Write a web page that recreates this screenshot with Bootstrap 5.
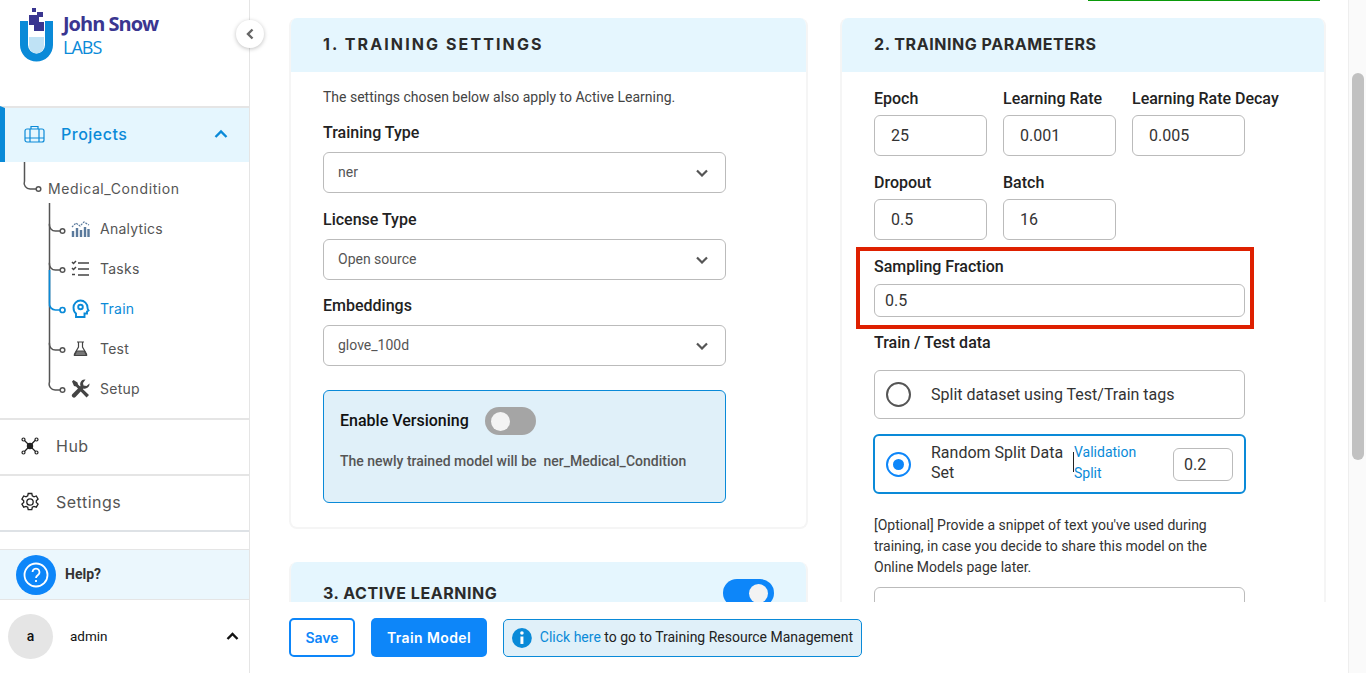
<!DOCTYPE html>
<html lang="en">
<head>
    <meta charset="UTF-8">
    <meta name="viewport" content="width=device-width, initial-scale=1.0">
    <title>Train - Medical_Condition</title>
    <link href="https://cdn.jsdelivr.net/npm/bootstrap@5.3.0/dist/css/bootstrap.min.css" rel="stylesheet">
    <style>
        body { font-family: Roboto, "Liberation Sans", sans-serif; color: #212529; background: #fff; font-size: 14px; }
        .side-bar { width: 250px; border-right: 1px solid #e5e5e5; }
        .logo-area { height: 106px; padding: 8px 0 0 20px; gap: 10px; }
        .logo-name { font-family: "Open Sans", sans-serif; font-weight: 700; font-size: 20px; letter-spacing: -1px; color: #3a3690; line-height: 22px; margin-top: 5px; }
        .logo-labs { font-family: "Open Sans", sans-serif; font-size: 18px; letter-spacing: -1px; color: #0a8ad8; line-height: 25px; }
        .collapse-btn { top: 20px; right: -15px; width: 28px; height: 28px; background: #fff; border-radius: 50%; box-shadow: 0 1px 4px rgba(0,0,0,.25); z-index: 5; }
        .menu-row { height: 56px; border-top: 2px solid #e5e5e5; padding: 0 0 2px 20px; font-family: Inter, sans-serif; font-size: 16px; letter-spacing: .5px; color: #555; }
        .menu-row svg { margin-right: 16px; }
        .menu-active { background: #e5f6fe; color: #0a8ad8; border-left: 5px solid #0a8ad8; padding: 0 21px 2px 19px; gap: 16px; font-weight: 500; height: 56px; border-top: 2px solid #e5e5e5; font-family: Inter, sans-serif; font-size: 16px; letter-spacing: .5px; }
        .menu-tree { height: 256px; font-family: Inter, sans-serif; font-size: 14px; letter-spacing: .25px; color: #555; }
        .tree-lines { left: 0; top: 0; }
        .tree-project { height: 46px; padding: 16px 0 0 48px; letter-spacing: .6px; }
        .tree-item { height: 40px; padding-left: 71px; gap: 10px; }
        .tree-on { color: #0a8ad8; }
        .tree-icon { width: 19px; height: 19px; }
        .help-row { height: 51px; margin-top: 17px; background: #ebf7fd; border-top: 1px solid #e5e5e5; border-bottom: 1px solid #e5e5e5; padding-left: 16px; gap: 9px; font-size: 14px; font-weight: 700; color: #333; }
        .help-circle { width: 40px; height: 40px; background: #0d86f9; border-radius: 50%; }
        .user-row { height: 72px; padding: 0 10px 0 8px; font-size: 13.5px; color: #111; }
        .user-avatar { width: 45px; height: 45px; background: #e5e5e5; margin-right: 17px; font-size: 14px; font-weight: 500; }
        .scroll-area { padding: 18px 0 0 39px; gap: 32px; }
        .top-toast { top: 0; left: 838px; width: 232px; height: 1px; background: #0a9a0a; }
        .col-one { width: 519px; }
        .col-two { width: 486px; }
        .panel-box { border: 2px solid #f5f5f5; border-top: 0; border-radius: 8px; overflow: hidden; flex-shrink: 0; }
        .panel-head { height: 54px; background: #e5f6fe; padding: 0 32px 2px; font-family: Inter, sans-serif; font-weight: 700; font-size: 16px; color: #2b2b2b; letter-spacing: .55px; }
        .head-wide { letter-spacing: 2.1px; }
        .head-tall { height: 62px; padding-bottom: 0; }
        .panel-gap { margin-top: 33px; }
        .panel-text { padding: 15px 32px 24px; }
        .panel-note { font-size: 14px; color: #444; margin-bottom: 14px; line-height: 20px; }
        .field-label { font-size: 16px; font-weight: 500; line-height: 24px; margin-bottom: 7px; color: #222; }
        .pick-box { width: 403px; height: 41px; font-size: 14px; color: #555; padding: 0 14px; border-color: #bbb; margin-bottom: 14px; background-image: url("data:image/svg+xml,%3csvg xmlns='http://www.w3.org/2000/svg' viewBox='0 0 12 8'%3e%3cpath fill='none' stroke='%23555' stroke-width='2.200' d='M1 1.500l5 5 5-5'/%3e%3c/svg%3e"); background-size: 12px 8px; background-position: right 17px center; }
        .pick-first { margin-bottom: 15px; }
        .version-box { width: 403px; height: 113px; margin-top: 24px; background: #e0f0f9; border: 1px solid #0a8ad8; border-radius: 6px; padding: 14px 16px; }
        .version-title { font-size: 16px; font-weight: 500; color: #111; gap: 16px; height: 32px; }
        .switch-off { width: 51px; height: 28px; border-radius: 14px; background: #a5a5a5; padding: 0 6px; }
        .switch-on { width: 51px; height: 28px; border-radius: 14px; background: #0d86f9; padding: 0 6px; }
        .switch-dot { width: 19px; height: 19px; border-radius: 50%; background: #f3f3f3; }
        .version-note { font-size: 14px; font-weight: 500; color: #555; margin-top: 14px; }
        .num-grid { display: grid; grid-template-columns: repeat(3, 113px); column-gap: 16px; row-gap: 0; }
        .num-field { height: 84px; }
        .num-label { font-size: 16px; font-weight: 500; line-height: 24px; color: #222; white-space: nowrap; margin-bottom: 4px; }
        .num-input { height: 41px; width: 113px; font-size: 16px; padding: 0 16px; border-color: #bbb; color: #333; }
        .sample-box { width: 398px; height: 82px; margin: -8px 0 0 -18px; border: 4px solid #de2000; padding: 4px 0 0 14px; }
        .sample-gap { margin-bottom: 5px; }
        .sample-input { height: 33px; width: 371px; font-size: 16px; padding: 0 10px; border-color: #bbb; color: #333; }
        .split-title { font-size: 16px; font-weight: 500; line-height: 24px; color: #222; margin-top: 2px; }
        .split-one { width: 371px; height: 49px; margin-top: 15px; border: 1px solid #bbb; border-radius: 6px; padding-left: 12px; gap: 19px; font-size: 16px; color: #333; }
        .split-two { width: 373px; height: 60px; margin: 15px 0 0 -1px; border: 2px solid #0a8ad8; border-radius: 6px; padding: 0 12px 2px 11px; gap: 20px; font-size: 16px; line-height: 20px; color: #333; }
        .radio-off { width: 25px; height: 25px; border: 2px solid #555; border-radius: 50%; flex-shrink: 0; margin-left: -1px; margin-right: 1px; }
        .radio-on { width: 25px; height: 25px; border: 2px solid #0d86f9; border-radius: 50%; flex-shrink: 0; margin-top: 2px; }
        .radio-on span { width: 11px; height: 11px; background: #0d86f9; border-radius: 50%; }
        .split-name { width: 143px; flex-shrink: 0; }
        .split-link { color: #0a8ad8; font-size: 14px; line-height: 21px; width: 88px; flex-shrink: 0; margin-left: -20px; }
        .split-caret { left: -1px; top: 10px; width: 1px; height: 20px; background: #222; }
        .split-input { width: 60px; height: 33px; font-size: 16px; padding: 0 10px; border-color: #bbb; color: #333; margin: 2px 0 0 -9px; }
        .split-hint { font-size: 14px; line-height: 21px; color: #333; margin-top: 21px; width: 371px; }
        .snippet-box { width: 371px; height: 80px; margin-top: 9px; border-color: #bbb; }
        .foot-bar { height: 71px; padding: 0 0 0 39px; gap: 16px; background: #fff; }
        .btn-save { width: 66px; height: 39px; border: 2px solid #0d86f9; color: #0d86f9; background: #fff; font-family: Inter, sans-serif; font-weight: 600; font-size: 14px; padding: 0; border-radius: 5px; }
        .btn-train { width: 116px; height: 39px; background: #0d86f9; color: #fff; border: 0; font-family: Inter, sans-serif; font-weight: 600; font-size: 14px; letter-spacing: .4px; padding: 0; border-radius: 5px; }
        .info-box { width: 359px; height: 38px; background: #e0f0f9; border: 1px solid #0a8ad8; border-radius: 5px; padding: 0 8px; gap: 8px; font-size: 14px; color: #222; white-space: nowrap; }
        .info-link { color: #0a8ad8; }
        .scroll-track { width: 18px; background: #fafafa; border-left: 1px solid #eee; padding: 73px 0 0 3px; flex-shrink: 0; }
        .scroll-thumb { width: 12px; height: 387px; background: #c1c1c1; border-radius: 6px; }
    </style>
</head>
<body class="overflow-hidden">
<div class="d-flex vh-100">
    <!-- sidebar -->
    <aside class="side-bar d-flex flex-column flex-shrink-0 position-relative">
        <div class="logo-area d-flex">
            <svg width="33" height="54" viewBox="0 0 33 54">
                <path d="M0 13h8v24a8 8 0 0 0 17 0V13h8v24a16 16 0 0 1-33 0z" fill="#0a8ad8"/>
                <path d="M9 29h15v9a7.500 7.500 0 0 1-15 0z" fill="#bfe2f5"/>
                <path d="M12 0h4v4h-4zM9 7h8V4h6v5h-4v5h5v9H14v-6H9z" fill="#3a3690"/>
            </svg>
            <div>
                <div class="logo-name">John Snow</div>
                <div class="logo-labs">LABS</div>
            </div>
        </div>
        <div class="collapse-btn position-absolute d-flex align-items-center justify-content-center">
            <svg width="10" height="12" viewBox="0 0 10 12"><path d="M7.500 1.500 3 6l4.500 4.500" fill="none" stroke="#666" stroke-width="2.400"/></svg>
        </div>
        <div class="menu-active d-flex align-items-center">
            <svg width="21" height="18" viewBox="0 0 21 18" fill="none" stroke="#0a8ad8" stroke-width="1.200"><rect x="1" y="4" width="19" height="13" rx="2"/><path d="M7 4V1.500h7V4M6 4v13M15 4v13M1 13h19"/></svg>
            <span class="flex-grow-1">Projects</span>
            <svg width="14" height="10" viewBox="0 0 14 10"><path d="M1.500 8 7 2.500 12.500 8" fill="none" stroke="#0a8ad8" stroke-width="2.400"/></svg>
        </div>
        <div class="menu-tree position-relative">
            <svg class="tree-lines position-absolute" width="80" height="256" viewBox="0 0 80 256" fill="none" stroke="#555" stroke-width="1.500">
                <path d="M24.500 0v19a6 6 0 0 0 6 8h6"/><circle cx="38.500" cy="27" r="2.300" fill="#fff"/>
                <path d="M49.500 41v179a6 6 0 0 0 6 8h5"/>
                <path d="M49.500 62a6 6 0 0 0 6 7h5M49.500 101a6 6 0 0 0 6 7h5M49.500 181a6 6 0 0 0 6 7h5"/>
                <path d="M49.500 108v33a6 6 0 0 0 6 7h5" stroke="#0a8ad8" stroke-width="1.700"/>
                <circle cx="62.500" cy="69" r="2.300" fill="#fff"/><circle cx="62.500" cy="108" r="2.300" fill="#fff"/>
                <circle cx="62.500" cy="148" r="2.500" fill="#fff" stroke="#0a8ad8" stroke-width="1.700"/>
                <circle cx="62.500" cy="188" r="2.300" fill="#fff"/><circle cx="62.500" cy="228" r="2.300" fill="#fff"/>
            </svg>
            <div class="tree-project">Medical_Condition</div>
            <div class="tree-item d-flex align-items-center">
                <svg class="tree-icon" viewBox="0 0 19 19" fill="none" stroke="#5b7a9c" stroke-width="1.200"><path d="M1 8 5 4l4 3 4-4 5 3" stroke-dasharray="2 1"/><path d="M2 18v-6M6 18V9M10 18v-7M14 18V8M17.500 18v-8" stroke-width="2.400"/></svg>
                <span>Analytics</span>
            </div>
            <div class="tree-item d-flex align-items-center">
                <svg class="tree-icon" viewBox="0 0 19 19" fill="none" stroke="#444" stroke-width="1.500"><path d="M7 4h11M7 10h11M7 16h11"/><path d="m1 3 1.500 1.500L5 2M1 9l1.500 1.500L5 8M1 15.500h3"/></svg>
                <span>Tasks</span>
            </div>
            <div class="tree-item tree-on d-flex align-items-center">
                <svg class="tree-icon" viewBox="0 0 19 19" fill="none" stroke="#0a8ad8" stroke-width="1.900"><path d="M5 18v-3.500C3 13 2.500 11 2.500 8.500a7 7 0 0 1 14 0c0 1 0 1.500 1 3l-1.500 1v2h-2.500V18z"/><circle cx="9.500" cy="8" r="2.300"/></svg>
                <span>Train</span>
            </div>
            <div class="tree-item d-flex align-items-center">
                <svg class="tree-icon" viewBox="0 0 19 19" fill="none" stroke="#444" stroke-width="1.200"><path d="M6 3h7M7.500 3v5L3.500 15a1 1 0 0 0 1 1.500h10a1 1 0 0 0 1-1.500l-4-7V3"/><path d="M5.500 12h8l2 4.500h-12z" fill="#777"/></svg>
                <span>Test</span>
            </div>
            <div class="tree-item d-flex align-items-center">
                <svg class="tree-icon" viewBox="0 0 19 19" fill="#444"><path d="M1 2.500 2.500 1l4 2.500.5 2 11 10.500-2.500 2.500L5 7.500l-2-.5z"/><path d="M18.500 4.500 15.500 7l-3-.5L12 4l2.500-3.500A4.800 4.800 0 0 0 9.500 7L1.500 15a2 2 0 0 0 3 3L12.500 9.500a4.800 4.800 0 0 0 6-5z"/></svg>
                <span>Setup</span>
            </div>
        </div>
        <div class="menu-row d-flex align-items-center">
            <svg width="20" height="18" viewBox="0 0 18 18" fill="none" stroke="#222" stroke-width="1.200"><circle cx="9" cy="9" r="2.600" fill="#222"/><path d="m3 3 12 12M15 2.500 3 15"/><circle cx="2.500" cy="2.500" r="1.500" fill="#fff"/><circle cx="15.500" cy="2.500" r="1.500" fill="#fff"/><circle cx="2.500" cy="15.500" r="1.500" fill="#fff"/><circle cx="15.500" cy="15.500" r="1.500" fill="#fff"/></svg>
            <span>Hub</span>
        </div>
        <div class="menu-row d-flex align-items-center">
            <svg width="20" height="20" viewBox="0 0 20 20" fill="none" stroke="#222" stroke-width="1.300"><path d="M8.200 1.500h3.600l.5 2.400 1.700.9 2.300-.8 1.800 3.100-1.800 1.600v1.800l1.800 1.600-1.800 3.100-2.300-.8-1.700.9-.5 2.400H8.200l-.5-2.400-1.700-.9-2.300.8-1.800-3.100 1.800-1.600V8.700L1.900 7.100l1.800-3.100 2.300.8 1.700-.9z"/><circle cx="10" cy="10" r="3.200"/></svg>
            <span>Settings</span>
        </div>
        <div class="border-top border-2"></div>
        <div class="help-row d-flex align-items-center">
            <div class="help-circle d-flex align-items-center justify-content-center">
                <svg width="26" height="26" viewBox="0 0 26 26" fill="none" stroke="#fff" stroke-width="1.800"><circle cx="13" cy="13" r="11.500"/><path d="M9.500 10a3.500 3.500 0 1 1 5.500 3c-1.300.9-2 1.500-2 3"/><path d="M13 18v2"/></svg>
            </div>
            <span>Help?</span>
        </div>
        <div class="user-row d-flex align-items-center">
            <div class="user-avatar rounded-circle d-flex align-items-center justify-content-center">a</div>
            <span class="flex-grow-1">admin</span>
            <svg width="13" height="9" viewBox="0 0 13 9"><path d="M1.500 7 6.500 2l5 5" fill="none" stroke="#111" stroke-width="2.400"/></svg>
        </div>
    </aside>

    <!-- main -->
    <main class="d-flex flex-column flex-grow-1 overflow-hidden">
        <div class="scroll-area d-flex flex-grow-1 overflow-hidden position-relative">
            <div class="top-toast position-absolute"></div>
            <div class="col-one d-flex flex-column flex-shrink-0">
                <div class="panel-box">
                    <div class="panel-head head-wide d-flex align-items-center">1. TRAINING SETTINGS</div>
                    <div class="panel-text">
                        <p class="panel-note">The settings chosen below also apply to Active Learning.</p>
                        <div class="field-label">Training Type</div>
                        <select class="form-select pick-box pick-first"><option>ner</option></select>
                        <div class="field-label">License Type</div>
                        <select class="form-select pick-box"><option>Open source</option></select>
                        <div class="field-label">Embeddings</div>
                        <select class="form-select pick-box"><option>glove_100d</option></select>
                        <div class="version-box">
                            <div class="version-title d-flex align-items-center">
                                <span>Enable Versioning</span>
                                <div class="switch-off d-flex align-items-center"><span class="switch-dot"></span></div>
                            </div>
                            <div class="version-note">The newly trained model will be&nbsp; ner_Medical_Condition</div>
                        </div>
                    </div>
                </div>
                <div class="panel-box panel-gap">
                    <div class="panel-head head-tall d-flex align-items-center justify-content-between">
                        <span>3. ACTIVE LEARNING</span>
                        <div class="switch-on d-flex align-items-center justify-content-end"><span class="switch-dot"></span></div>
                    </div>
                </div>
            </div>
            <div class="col-two flex-shrink-0">
                <div class="panel-box">
                    <div class="panel-head d-flex align-items-center">2. TRAINING PARAMETERS</div>
                    <div class="panel-text">
                        <div class="num-grid">
                            <div class="num-field"><div class="num-label">Epoch</div><input class="form-control num-input" value="25"></div>
                            <div class="num-field"><div class="num-label">Learning Rate</div><input class="form-control num-input" value="0.001"></div>
                            <div class="num-field"><div class="num-label">Learning Rate Decay</div><input class="form-control num-input" value="0.005"></div>
                            <div class="num-field"><div class="num-label">Dropout</div><input class="form-control num-input" value="0.5"></div>
                            <div class="num-field"><div class="num-label">Batch</div><input class="form-control num-input" value="16"></div>
                        </div>
                        <div class="sample-box">
                            <div class="num-label sample-gap">Sampling Fraction</div>
                            <input class="form-control sample-input" value="0.5">
                        </div>
                        <div class="split-title">Train / Test data</div>
                        <div class="split-one d-flex align-items-center">
                            <span class="radio-off"></span>
                            <span>Split dataset using Test/Train tags</span>
                        </div>
                        <div class="split-two d-flex align-items-center">
                            <span class="radio-on d-flex align-items-center justify-content-center"><span></span></span>
                            <span class="split-name">Random Split Data Set</span>
                            <span class="split-link position-relative"><span class="split-caret position-absolute"></span>Validation Split</span>
                            <input class="form-control split-input" value="0.2">
                        </div>
                        <div class="split-hint">[Optional] Provide a snippet of text you've used during training, in case you decide to share this model on the Online Models page later.</div>
                        <textarea class="form-control snippet-box"></textarea>
                    </div>
                </div>
            </div>
        </div>
        <div class="foot-bar d-flex align-items-center flex-shrink-0">
            <button class="btn btn-save">Save</button>
            <button class="btn btn-train">Train Model</button>
            <div class="info-box d-flex align-items-center">
                <svg width="20" height="20" viewBox="0 0 20 20"><circle cx="10" cy="10" r="10" fill="#0a8ad8"/><circle cx="10" cy="5" r="1.800" fill="#fff"/><path d="M8.500 8.500h3V16h-3z" fill="#fff"/></svg>
                <span><span class="info-link">Click here</span> to go to Training Resource Management</span>
            </div>
        </div>
    </main>
    <div class="scroll-track"><div class="scroll-thumb"></div></div>
</div>
<script src="https://cdn.jsdelivr.net/npm/bootstrap@5.3.0/dist/js/bootstrap.bundle.min.js"></script>
</body>
</html>
